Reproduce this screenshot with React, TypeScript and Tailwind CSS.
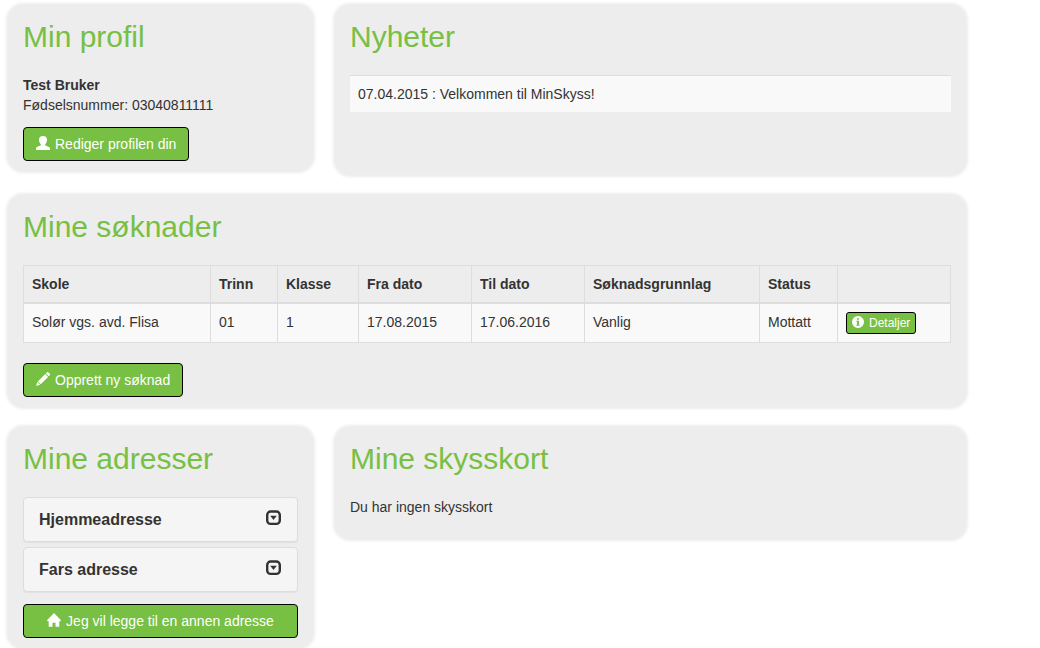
import type { ReactNode } from 'react';

type IconProps = { className?: string };

function UserIcon({ className }: IconProps) {
  return (
    <svg viewBox="0 0 14 14" className={className} fill="currentColor" aria-hidden="true">
      <path d="M7 0C9.900 0 11.200 1.800 11 4.100C10.900 6 10.100 7.500 9.200 8.200V9.200C9.500 10 13.800 10.400 14 12.200V14H0V12.200C.2 10.400 4.500 10 4.800 9.200V8.200C3.900 7.500 3.100 6 3 4.100C2.800 1.800 4.100 0 7 0Z" />
    </svg>
  );
}

function PencilIcon({ className }: IconProps) {
  return (
    <svg viewBox="0 0 14 14" className={className} fill="currentColor" aria-hidden="true">
      <path d="M10.700.5a1.300 1.300 0 0 1 1.800 0l1.100 1.100a1.300 1.300 0 0 1 0 1.800l-.9.9-2.900-2.900ZM9.200 2l2.900 2.900-7.400 7.400-2.900-2.900ZM1.300 9.900l2.900 2.900-4.100 1.200Z" />
    </svg>
  );
}

function HomeIcon({ className }: IconProps) {
  return (
    <svg viewBox="0 0 14 14" className={className} fill="currentColor" aria-hidden="true">
      <path d="M7 0 14 7.300l-.6.900H12.300v5.500H8.500V9.800H5.500v3.900H1.700V8.200H.6L0 7.300Z" />
    </svg>
  );
}

function InfoIcon({ className }: IconProps) {
  return (
    <svg viewBox="0 0 12 12" className={className} fill="currentColor" fillRule="evenodd" aria-hidden="true">
      <path d="M6 0a6 6 0 1 1 0 12A6 6 0 0 1 6 0ZM5 2.200v1.600h2V2.200ZM4.300 4.700v1H5v3h-.7v1h3.400v-1H7v-4Z" />
    </svg>
  );
}

function ExpandIcon({ className }: IconProps) {
  return (
    <svg viewBox="0 0 16 16" className={className} aria-hidden="true">
      <rect x="1.200" y="1.500" width="12.600" height="12.400" rx="3.400" fill="none" stroke="currentColor" strokeWidth="2.400" />
      <path d="M4.200 5.700h6.600l-3.300 4.300Z" fill="currentColor" />
    </svg>
  );
}

function Card({ title, className = '', children }: { title: string; className?: string; children: ReactNode }) {
  return (
    <section className={`rounded-[15px] bg-[#ededed] px-[15px] pt-[15px] shadow-[0_0_3px_2px_#ededed] ${className}`}>
      <h2 className="mb-[22px] text-[30px] leading-[33px] text-[#77c043]">{title}</h2>
      {children}
    </section>
  );
}

const buttonStyle = 'rounded border border-black bg-[#77c043] px-3 py-1.5 text-sm leading-5 text-white';

const columns = [
  { label: 'Skole', width: 'w-[187px]' },
  { label: 'Trinn', width: 'w-[67px]' },
  { label: 'Klasse', width: 'w-[81px]' },
  { label: 'Fra dato', width: 'w-[113px]' },
  { label: 'Til dato', width: 'w-[113px]' },
  { label: 'Søknadsgrunnlag', width: 'w-[175px]' },
  { label: 'Status', width: 'w-[78px]' },
  { label: '', width: 'w-[113px]' },
];

const application = ['Solør vgs. avd. Flisa', '01', '1', '17.08.2015', '17.06.2016', 'Vanlig', 'Mottatt'];

export default function App() {
  return (
    <main className="grid max-w-[974px] grid-cols-[305fr_631fr] items-start gap-x-[22px] gap-y-5 px-2 pt-[5px] font-['Liberation_Sans',Arial,sans-serif] text-sm leading-5 text-[#333]">
      <Card title="Min profil" className="pb-[10px]">
        <p className="font-bold">Test Bruker</p>
        <p>Fødselsnummer: 03040811111</p>
        <button type="button" className={`mt-3 ${buttonStyle}`}>
          <UserIcon className="mr-[5px] inline-block size-3.5 align-[-1px]" />
          <span>Rediger profilen din</span>
        </button>
      </Card>

      <Card title="Nyheter" className="pb-[63px]">
        <p className="border-t border-[#ddd] bg-[#f9f9f9] p-2">07.04.2015 : Velkommen til MinSkyss!</p>
      </Card>

      <Card title="Mine søknader" className="col-span-2 pb-[10px]">
        <table className="w-full table-fixed border-collapse border border-[#ddd] text-left">
          <thead>
            <tr>
              {columns.map((column) => (
                <th key={column.label} scope="col" className={`border border-b-2 border-[#ddd] p-2 ${column.width}`}>
                  {column.label}
                </th>
              ))}
            </tr>
          </thead>
          <tbody>
            <tr className="bg-[#f9f9f9]">
              {application.map((value, index) => (
                <td key={index} className="border border-[#ddd] p-2 align-top">
                  {value}
                </td>
              ))}
              <td className="border border-[#ddd] p-2 align-top">
                <button
                  type="button"
                  className="block rounded-[3px] border border-black bg-[#77c043] px-[5px] py-px text-xs leading-[18px] text-white"
                >
                  <InfoIcon className="mr-[5px] inline-block size-3 align-[-1px]" />
                  <span>Detaljer</span>
                </button>
              </td>
            </tr>
          </tbody>
        </table>
        <button type="button" className={`mt-5 ${buttonStyle}`}>
          <PencilIcon className="mr-[5px] inline-block size-3.5 align-[-1px]" />
          <span>Opprett ny søknad</span>
        </button>
      </Card>

      <Card title="Mine adresser" className="pb-[10px]">
        <div className="flex flex-col gap-[5px]">
          {['Hjemmeadresse', 'Fars adresse'].map((name) => (
            <button
              key={name}
              type="button"
              className="flex items-start justify-between rounded border border-[#ddd] bg-[#f5f5f5] px-[15px] py-3 text-left text-base leading-[19px] font-bold shadow-[0_1px_1px_rgba(0,0,0,0.05)]"
            >
              <span>{name}</span>
              <ExpandIcon className="size-4" />
            </button>
          ))}
        </div>
        <button type="button" className={`mt-3 w-full ${buttonStyle}`}>
          <HomeIcon className="mr-[5px] inline-block size-3.5 align-[-1px]" />
          <span>Jeg vil legge til en annen adresse</span>
        </button>
      </Card>

      <Card title="Mine skysskort" className="pb-[22px]">
        <p>Du har ingen skysskort</p>
      </Card>
    </main>
  );
}
